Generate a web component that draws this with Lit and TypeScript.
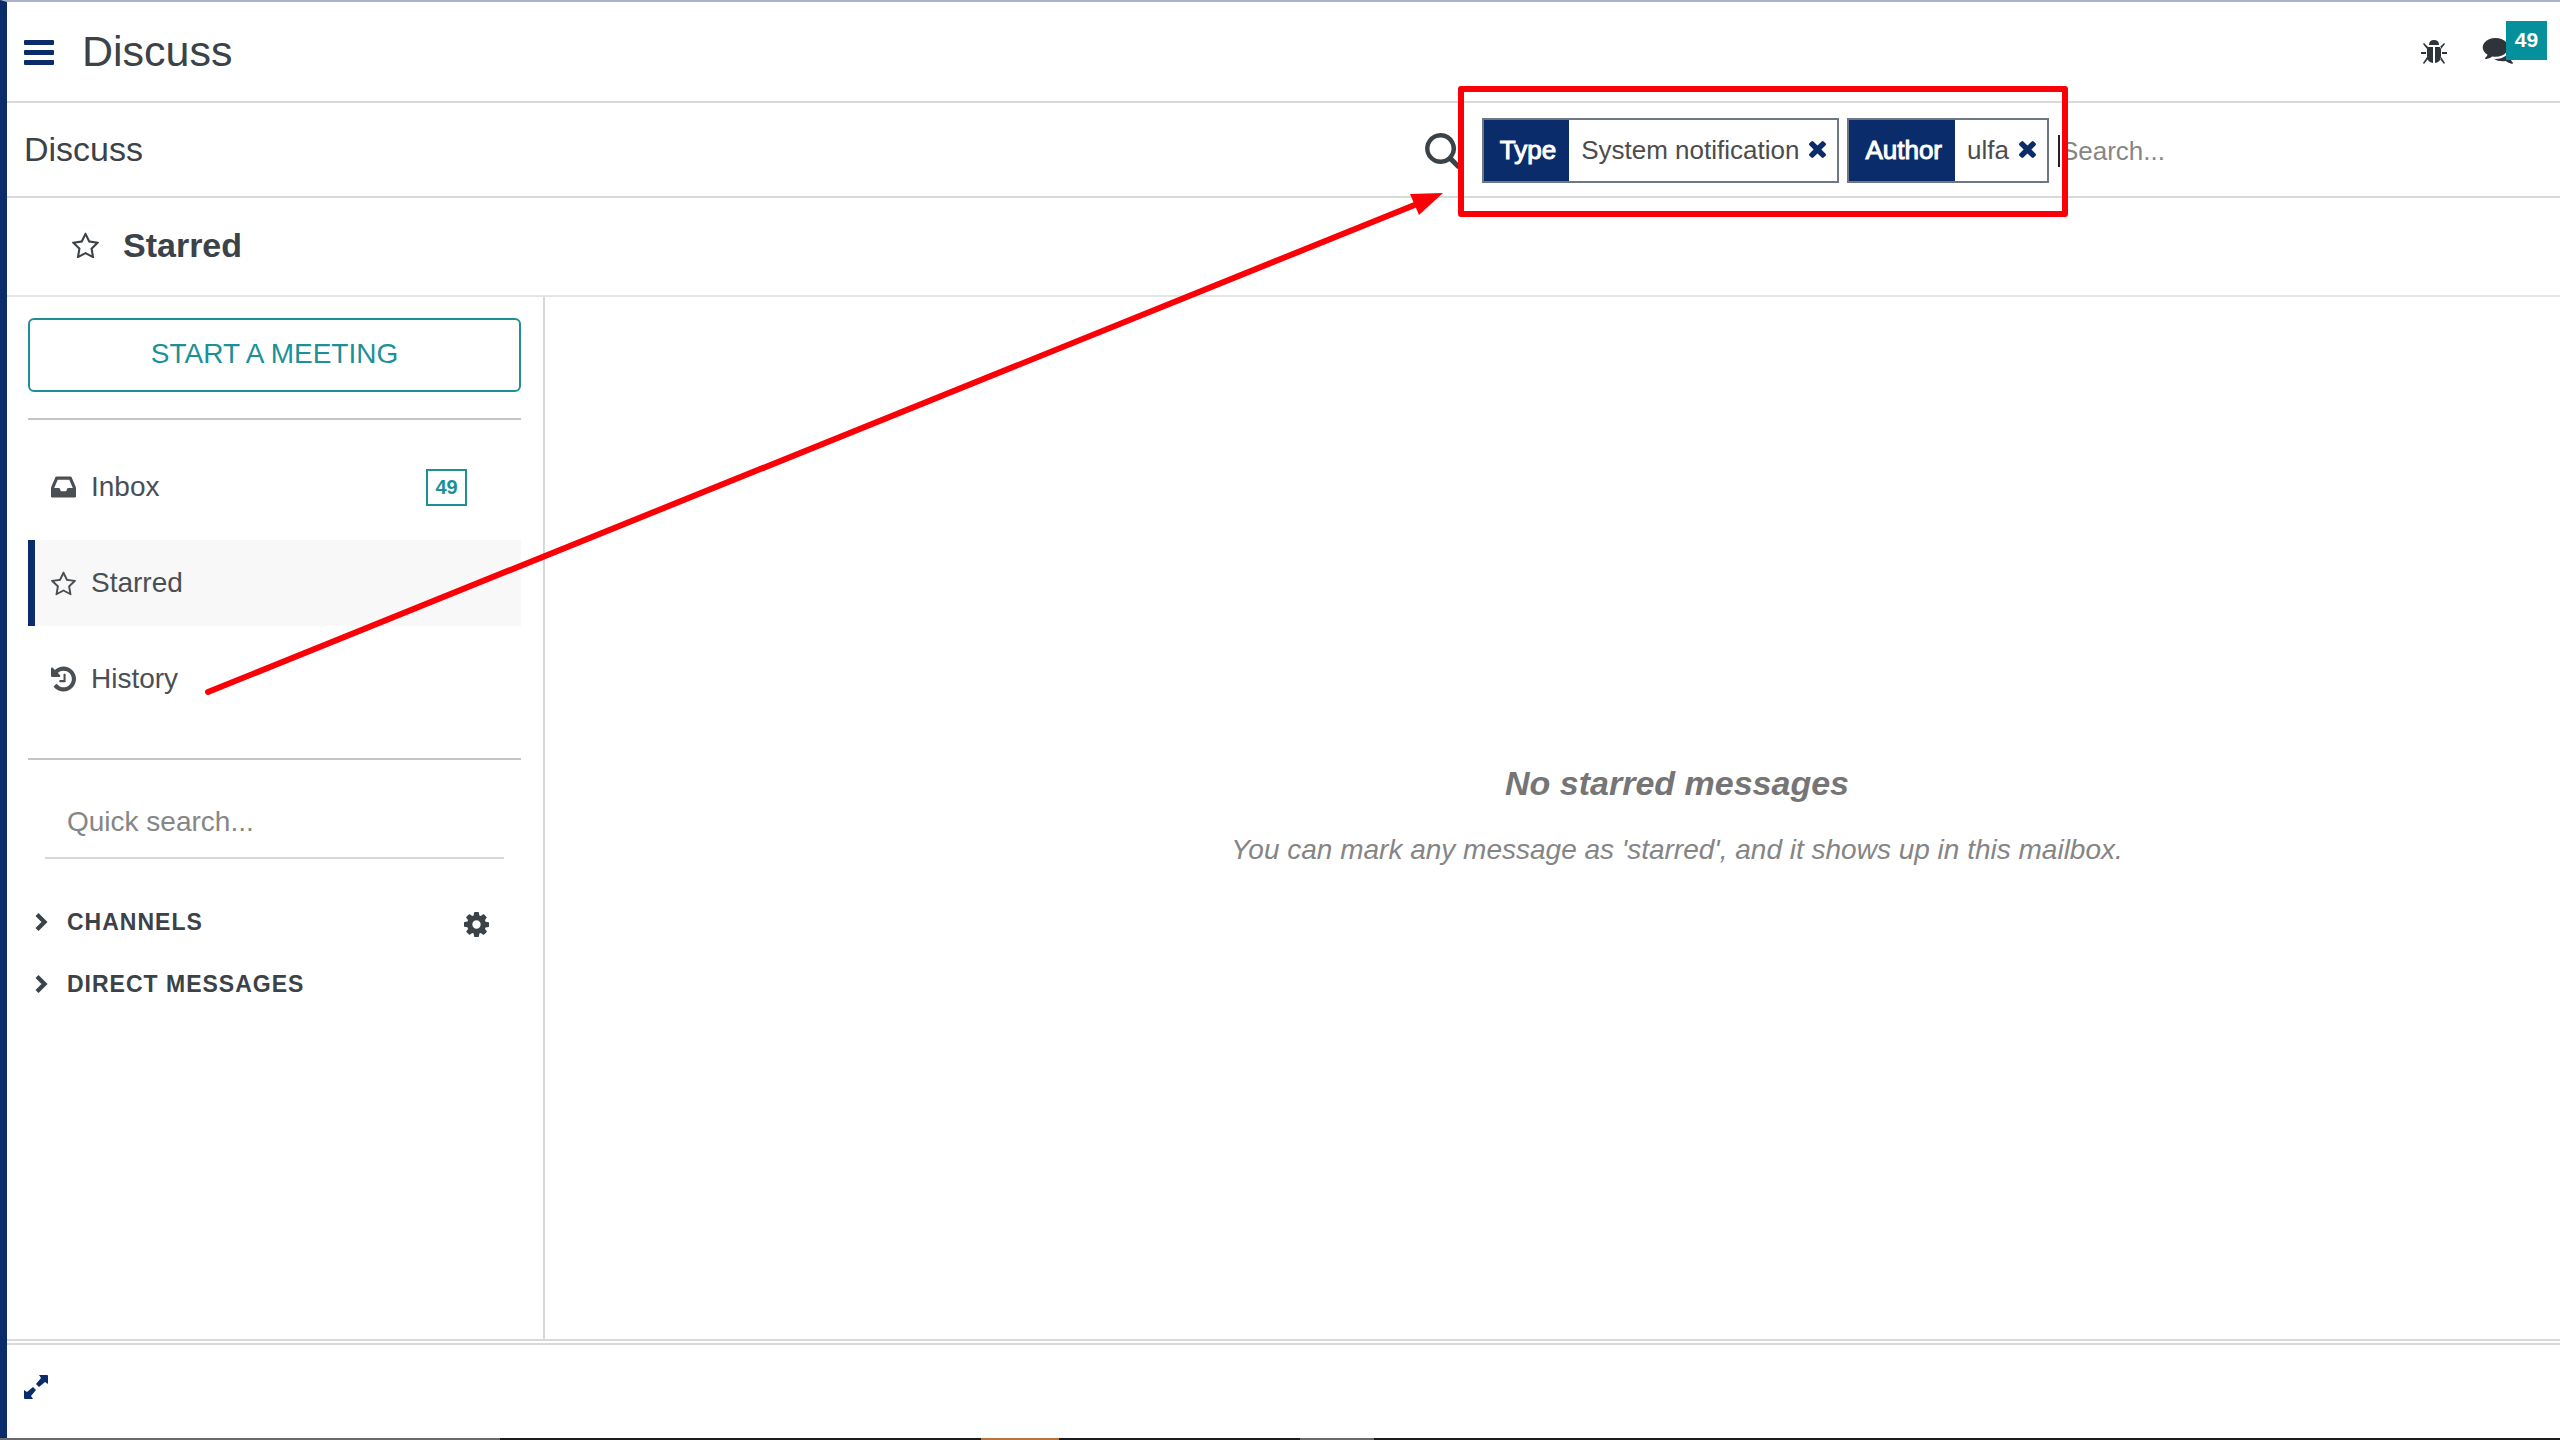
import { LitElement, html, css, svg } from "lit";
import { customElement, property } from "lit/decorators.js";

interface Glyph {
  box: string;
  d: string;
}

/* Filled outlines, each with its own view box. */
const GLYPHS: Record<string, Glyph> = {
  bars: {
    box: "0 0 30 26",
    d: "M1 0H29Q30 0 30 1V4Q30 5 29 5H1Q0 5 0 4V1Q0 0 1 0ZM1 10H29Q30 10 30 11V14Q30 15 29 15H1Q0 15 0 14V11Q0 10 1 10ZM1 20H29Q30 20 30 21V24Q30 25 29 25H1Q0 25 0 24V21Q0 20 1 20Z",
  },
  star: {
    box: "0 0 1664 1600",
    d: "M1137 1004l306-297-422-62-189-382-189 382-422 62 306 297-73 421 378-199 377 199zm527-357q0 22-26 48l-363 354 86 500q1 7 1 20 0 50-41 50-19 0-40-12l-449-236-449 236q-22 12-40 12-21 0-31.500-14.500t-10.500-35.500q0-6 2-20l86-500-364-354q-25-27-25-48 0-37 56-46l502-73 225-455q19-41 49-41t49 41l225 455 502 73q56 9 56 46z",
  },
  inbox: {
    box: "0 0 1536 1280",
    d: "M1023 704h316q-1-3-2.500-8.500t-2.500-7.500l-212-496h-708l-212 496q-1 3-2.500 8.500t-2.500 7.500h316l95 192h320zm513 30v482q0 26-19 45t-45 19h-1408q-26 0-45-19t-19-45v-482q0-62 25-123l238-552q10-25 36.500-42t52.500-17h832q26 0 52.500 17t36.500 42l238 552q25 61 25 123z",
  },
  history: {
    box: "0 0 1536 1536",
    d: "M1536 768q0 156-61 298t-164 245-245 164-298 61q-172 0-327-72.500t-264-204.500q-7-10-6.500-22.500t8.500-20.500l137-138q10-9 25-9 16 2 23 12 73 95 179 147t225 52q104 0 198.500-40.500t163.500-109.500 109.500-163.500 40.500-198.500-40.500-198.500-109.500-163.500-163.500-109.500-198.500-40.500q-98 0-188 35.500t-160 101.500l137 138q31 30 14 69-17 40-59 40h-448q-26 0-45-19t-19-45v-448q0-42 40-59 39-17 69 14l130 129q107-101 244.500-156.500t284.500-55.500q156 0 298 61t245 164 164 245 61 298zm-640-288v448q0 14-9 23t-23 9h-320q-14 0-23-9t-9-23v-64q0-14 9-23t23-9h224v-352q0-14 9-23t23-9h64q14 0 23 9t9 23z",
  },
  gear: {
    box: "0 0 1536 1536",
    d: "M1024 768q0-106-75-181t-181-75-181 75-75 181 75 181 181 75 181-75 75-181zm512-109v222q0 12-8 23t-20 13l-185 28q-19 54-39 91 35 50 107 138 10 12 10 25t-9 23q-27 37-99 108t-94 71q-12 0-26-9l-138-108q-44 23-91 38-16 136-29 186-7 28-36 28h-222q-14 0-24.500-8.500t-11.500-21.500l-28-184q-49-16-90-37l-141 107q-10 9-25 9-14 0-25-11-126-114-165-168-7-10-7-23 0-12 8-23 15-21 51-66.500t54-70.500q-27-50-41-99l-183-27q-13-2-21-12.500t-8-23.500v-222q0-12 8-23t19-13l186-28q14-46 39-92-40-57-107-138-10-12-10-24 0-10 9-23 26-36 98.500-107.500t94.500-71.500q13 0 26 10l138 107q44-23 91-38 16-136 29-186 7-28 36-28h222q14 0 24.500 8.500t11.500 21.500l28 184q49 16 90 37l142-107q9-9 24-9 13 0 25 10 129 119 165 170 7 8 7 22 0 12-8 23-15 21-51 66.500t-54 70.500q26 50 41 98l183 28q13 2 21 12.500t8 23.500z",
  },
  search: {
    box: "0 0 36 36",
    d: "M15.500 0A15.500 15.500 0 1 0 24.500 28.200L31.500 35.300Q33 36.500 34.600 35Q36.400 33.300 35 31.700L28 24.600A15.500 15.500 0 0 0 15.500 0ZM15.500 4.500A11 11 0 1 1 15.500 26.500A11 11 0 1 1 15.500 4.500Z",
  },
  times: {
    box: "0 0 1188 1188",
    d: "M1188 956q0 40-28 68l-136 136q-28 28-68 28t-68-28l-294-294-294 294q-28 28-68 28t-68-28l-136-136q-28-28-28-68t28-68l294-294-294-294q-28-28-28-68t28-68l136-136q28-28 68-28t68 28l294 294 294-294q28-28 68-28t68 28l136 136q28 28 28 68t-28 68l-294 294 294 294q28 28 28 68z",
  },
  chevron: {
    box: "0 0 12 18",
    d: "M3 0L12 9L3 18L0 15L6 9L0 3Z",
  },
  bug: {
    box: "0 0 26 26",
    d: "M8 6Q8 1 13 1Q18 1 18 6ZM6 8H12V24Q6 23 6 17ZM14 8H20V17Q20 23 14 24ZM0 13H5V15H0ZM21 13H26V15H21ZM2 5L3 4L7 8L6 10ZM24 5L23 4L19 8L20 10ZM6 18L7 20L3 25L2 24ZM20 18L19 20L23 25L24 24Z",
  },
  comments: {
    box: "0 0 1792 1536",
    d: "M1408 512q0 139-94 257t-256.500 186.500-353.500 68.500q-86 0-176-16-124 88-278 128-36 9-86 16h-3q-11 0-20.500-8t-11.500-21q-1-3-1-6.500t.5-6.500 2-6l2.500-5 3.500-5.500 4-5 4.500-5 4-4.500q5-6 23-25t26-29.500 22.500-29 25-38.500 20.500-44q-124-72-195-177t-71-224q0-139 94-257t256.500-186.500 353.500-68.500 353.500 68.500 256.500 186.500 94 257zm384 256q0 120-71 224.500t-195 176.500q10 24 20.500 44t25 38.500 22.500 29 26 29.500 23 25q1 1 4 4.500t4.500 5 4 5 3.500 5.500l2.500 5 2 6 .5 6.500-1 6.500q-3 14-13 22t-22 7q-50-7-86-16-154-40-278-128-90 16-176 16-271 0-472-132 58 4 88 4 161 0 309-45t264-129q125-92 192-212t67-254q0-77-23-152 129 71 204 178t75 230z",
  },
  expand: {
    box: "0 0 24 24",
    d: "M15 0H23Q24 0 24 1V9L21 7L15 12L12 9L17 3ZM9 24H1Q0 24 0 23V15L3 17L9 12L12 15L7 21Z",
  },
};

@customElement("ui-icon")
export class UiIcon extends LitElement {
  @property() name = "star";

  static styles = css`
    :host {
      display: inline-flex;
      flex: none;
    }
    .glyph {
      width: 100%;
      height: 100%;
      fill: currentColor;
    }
  `;

  render() {
    const g = GLYPHS[this.name];
    const rule = this.name === "search" ? "evenodd" : "nonzero";
    return html`<svg class="glyph" viewBox=${g.box} aria-hidden="true">
      ${svg`<path fill-rule=${rule} d=${g.d}></path>`}
    </svg>`;
  }
}

@customElement("search-facet")
export class SearchFacet extends LitElement {
  @property() label = "";
  @property() value = "";

  static styles = css`
    :host {
      display: flex;
      box-sizing: border-box;
      height: 65px;
      border: 2px solid #6f7785;
      background: #fff;
      font-size: 26px;
      line-height: 32px;
    }
    .label {
      display: flex;
      align-items: center;
      padding: 0 13px 2px 16px;
      background: #0b2c6b;
      color: #fff;
      -webkit-text-stroke: 1px #fff;
    }
    .value {
      display: flex;
      align-items: center;
      gap: 10px;
      padding: 0 11px 2px 12px;
      color: #4c4c4c;
      white-space: nowrap;
    }
    .remove {
      display: flex;
      padding: 0;
      border: 0;
      background: none;
      color: #0b2c6b;
    }
    .remove ui-icon {
      width: 17px;
      height: 17px;
    }
  `;

  render() {
    return html`
      <span class="label">${this.label}</span>
      <span class="value">
        ${this.value}
        <button class="remove" aria-label="Remove"><ui-icon name="times"></ui-icon></button>
      </span>
    `;
  }
}

@customElement("app-root")
export class AppRoot extends LitElement {
  static styles = css`
    :host {
      display: flex;
      flex-direction: column;
      position: relative;
      box-sizing: border-box;
      min-height: 100vh;
      overflow: hidden;
      background: #fff;
      color: #3b4248;
      font-family: "Liberation Sans", Arial, sans-serif;
      font-size: 28px;
      line-height: 32px;
    }
    * {
      box-sizing: border-box;
    }
    button,
    input {
      font: inherit;
      color: inherit;
    }
    button {
      padding: 0;
      border: 0;
      background: none;
      cursor: pointer;
    }
    h1,
    h2,
    h3,
    p {
      margin: 0;
    }
    .app {
      flex: 1;
      display: flex;
      flex-direction: column;
      border-top: 2px solid #a9b2ca;
      border-left: 7px solid #0b2c6b;
    }
    .navbar {
      display: flex;
      align-items: center;
      height: 101px;
      padding: 0 13px 0 17px;
      border-bottom: 2px solid #d9d9d9;
    }
    .menu {
      display: flex;
      padding-top: 2px;
      color: #0b2c6b;
    }
    .menu ui-icon {
      width: 30px;
      height: 26px;
    }
    .brand {
      flex: 1;
      margin-left: 28px;
      padding-bottom: 2px;
      font-size: 43px;
      font-weight: 400;
      line-height: 48px;
    }
    .systray {
      display: flex;
      align-items: center;
      gap: 35px;
      color: #2f343a;
    }
    .systray button {
      position: relative;
      display: flex;
    }
    .bug ui-icon {
      width: 26px;
      height: 26px;
    }
    .chat {
      width: 65px;
    }
    .chat ui-icon {
      width: 34px;
      height: 28px;
    }
    .count {
      position: absolute;
      right: 0;
      top: -17px;
      width: 41px;
      height: 39px;
      background: #06909b;
      color: #fff;
      font-size: 21px;
      font-weight: 700;
      line-height: 38px;
      text-align: center;
    }
    .control {
      display: flex;
      align-items: center;
      height: 95px;
      padding-left: 17px;
      border-bottom: 2px solid #d9d9d9;
    }
    .crumb {
      flex: 1;
      padding-bottom: 2px;
      font-size: 34px;
      font-weight: 400;
      line-height: 40px;
    }
    .searchbox {
      width: calc(45% - 6px);
      display: flex;
      align-items: center;
      padding-top: 2px;
    }
    .searchbox > ui-icon {
      width: 36px;
      height: 36px;
      margin-right: 21px;
    }
    .facets {
      display: flex;
      gap: 8px;
    }
    .search {
      flex: 1;
      min-width: 0;
      margin-left: 9px;
      padding: 0 0 0 1px;
      border: 0;
      border-left: 2px solid #222;
      outline: none;
      background: none;
      font-size: 26px;
      line-height: 32px;
    }
    input::placeholder {
      color: #868686;
      opacity: 1;
    }
    .thread {
      display: flex;
      align-items: center;
      gap: 24px;
      height: 99px;
      padding: 0 0 4px 65px;
      border-bottom: 2px solid #e4e6e6;
    }
    .star {
      width: 27px;
      height: 26px;
    }
    .thread-name {
      font-size: 34px;
      line-height: 40px;
    }
    .body {
      flex: 1;
      display: flex;
    }
    .sidebar {
      flex: none;
      width: 538px;
      padding: 21px 22px 0 21px;
      border-right: 2px solid #d6d8da;
    }
    .meeting {
      width: 100%;
      height: 74px;
      padding-bottom: 3px;
      border: 2px solid #1d9097;
      border-radius: 6px;
      color: #1d9097;
    }
    .rule {
      height: 2px;
      margin: 26px 0 24px;
      border: 0;
      background: #c4c4c4;
    }
    .boxes {
      display: flex;
      flex-direction: column;
      gap: 10px;
      margin-bottom: 36px;
    }
    .mailbox {
      display: flex;
      align-items: center;
      gap: 15px;
      height: 86px;
      padding: 0 54px 0 16px;
      border-left: 7px solid transparent;
      color: #4a4f54;
      text-align: left;
    }
    .mailbox.active {
      border-color: #0b2c6b;
      background: #f8f8f8;
    }
    .mailbox ui-icon {
      width: 25px;
      height: 26px;
    }
    .mailbox span {
      flex: 1;
    }
    .mailbox .counter {
      flex: none;
      width: 41px;
      height: 37px;
      border: 2px solid #1d9097;
      color: #1d9097;
      font-size: 20px;
      font-weight: 700;
      line-height: 33px;
      text-align: center;
    }
    .quick {
      display: block;
      width: calc(100% - 34px);
      height: 73px;
      margin: 26px 17px 32px;
      padding: 0 22px;
      border: 0;
      border-bottom: 2px solid #d6d8da;
      outline: none;
      background: none;
    }
    .category {
      display: flex;
      align-items: center;
      height: 62px;
      padding: 0 32px 0 7px;
      font-size: 23px;
      font-weight: 700;
    }
    .toggle {
      display: flex;
      flex: 1;
      align-items: center;
      gap: 19px;
      letter-spacing: 1px;
      text-align: left;
    }
    .toggle ui-icon {
      width: 13px;
      height: 18px;
    }
    .gear {
      display: flex;
      padding-top: 4px;
    }
    .gear ui-icon {
      width: 25px;
      height: 25px;
    }
    .empty {
      flex: 1;
      display: flex;
      flex-direction: column;
      align-items: center;
      justify-content: center;
      gap: 31px;
      padding: 0 0 8px 249px;
      font-style: italic;
      text-align: center;
      color: #858585;
    }
    .empty h3 {
      color: #757575;
      font-size: 34px;
      line-height: 40px;
    }
    .footer {
      display: flex;
      align-items: center;
      height: 99px;
      padding: 0 0 9px 17px;
      border-top: 6px double #d9d9d9;
    }
    .expand {
      display: flex;
      color: #0b2c6b;
    }
    .expand ui-icon {
      width: 24px;
      height: 24px;
    }
    .taskbar {
      display: grid;
      grid-template-columns: 500fr 481fr 78fr 241fr 74fr 1186fr;
      height: 2px;
      background: #1c1c1c;
    }
    .running {
      background: #6b6b6b;
    }
    .alert {
      background: #b8733e;
    }
    .callout {
      position: absolute;
      left: 1458px;
      top: 86px;
      width: 610px;
      height: 131px;
      border: 6px solid #fb0007;
      border-radius: 3px;
      pointer-events: none;
    }
    .arrow {
      position: absolute;
      left: 200px;
      top: 185px;
      width: 1250px;
      height: 520px;
      pointer-events: none;
    }
  `;

  private mailboxes = [
    { icon: "inbox", name: "Inbox", count: 49, active: false },
    { icon: "star", name: "Starred", count: 0, active: true },
    { icon: "history", name: "History", count: 0, active: false },
  ];

  render() {
    return html`
      <div class="app">
        <header class="navbar">
          <button class="menu" aria-label="Menu"><ui-icon name="bars"></ui-icon></button>
          <h1 class="brand">Discuss</h1>
          <div class="systray">
            <button class="bug" aria-label="Debug"><ui-icon name="bug"></ui-icon></button>
            <button class="chat" aria-label="Conversations">
              <ui-icon name="comments"></ui-icon><span class="count">49</span>
            </button>
          </div>
        </header>
        <div class="control">
          <h2 class="crumb">Discuss</h2>
          <div class="searchbox">
            <ui-icon name="search"></ui-icon>
            <div class="facets">
              <search-facet label="Type" value="System notification"></search-facet>
              <search-facet label="Author" value="ulfa"></search-facet>
            </div>
            <input class="search" type="text" placeholder="Search..." aria-label="Search" />
          </div>
        </div>
        <div class="thread">
          <ui-icon class="star" name="star"></ui-icon>
          <h2 class="thread-name">Starred</h2>
        </div>
        <div class="body">
          <nav class="sidebar">
            <button class="meeting">START A MEETING</button>
            <hr class="rule" />
            <div class="boxes">
              ${this.mailboxes.map(
                (m) => html`<button class="mailbox ${m.active ? "active" : ""}">
                  <ui-icon name=${m.icon}></ui-icon>
                  <span>${m.name}</span>
                  ${m.count ? html`<b class="counter">${m.count}</b>` : ""}
                </button>`,
              )}
            </div>
            <hr class="rule" />
            <input class="quick" type="text" placeholder="Quick search..." aria-label="Quick search" />
            <div class="category">
              <button class="toggle"><ui-icon name="chevron"></ui-icon>CHANNELS</button>
              <button class="gear" aria-label="Channel settings"><ui-icon name="gear"></ui-icon></button>
            </div>
            <div class="category">
              <button class="toggle"><ui-icon name="chevron"></ui-icon>DIRECT MESSAGES</button>
            </div>
          </nav>
          <main class="empty">
            <h3>No starred messages</h3>
            <p>You can mark any message as 'starred', and it shows up in this mailbox.</p>
          </main>
        </div>
        <footer class="footer">
          <button class="expand" aria-label="Expand"><ui-icon name="expand"></ui-icon></button>
        </footer>
      </div>
      <div class="taskbar">
        <i class="running"></i><i></i><i class="alert"></i><i></i><i class="running"></i>
      </div>
      <div class="callout"></div>
      <svg class="arrow" viewBox="0 0 1250 520" aria-hidden="true">
        <path d="M8 507L1222 17" stroke="#fb0007" stroke-width="6" stroke-linecap="round"></path>
        <path d="M1243 8L1210 9L1219 30Z" fill="#fb0007"></path>
      </svg>
    `;
  }
}
